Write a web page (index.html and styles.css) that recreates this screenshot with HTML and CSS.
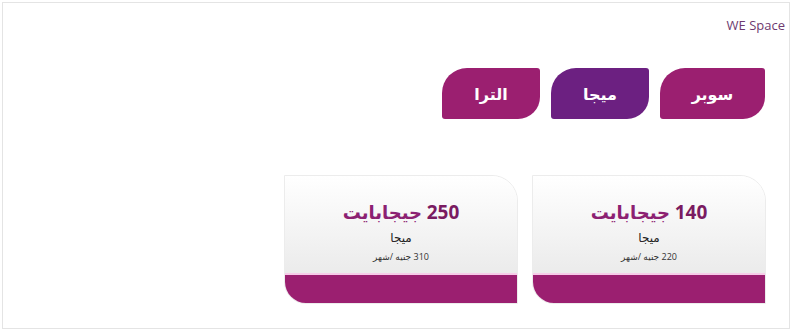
FILE: index.html
```html
<!DOCTYPE html>
<html lang="ar" dir="rtl">
<head>
    <meta charset="UTF-8">
    <meta name="viewport" content="width=device-width, initial-scale=1.0">
    <title>WE Space</title>
    <link rel="stylesheet" href="styles.css">
</head>
<body>

    <div class="space-box">
        <div class="brand">WE Space</div>

        <div class="tabs">
            <button class="tab tab-first">سوبر</button>
            <button class="tab active">ميجا</button>
            <button class="tab">الترا</button>
        </div>

        <div class="cards">
            <div class="card">
                <div class="card-body">
                    <h3><span class="num">140</span> جيجابايت</h3>
                    <p class="plan">ميجا</p>
                    <p class="price">220 جنيه /شهر</p>
                </div>
                <div class="card-foot"></div>
            </div>
            <div class="card">
                <div class="card-body">
                    <h3><span class="num">250</span> جيجابايت</h3>
                    <p class="plan">ميجا</p>
                    <p class="price">310 جنيه /شهر</p>
                </div>
                <div class="card-foot"></div>
            </div>
        </div>
    </div>

</body>
</html>
```
FILE: styles.css
```css
body {
    margin: 0;
    padding: 2px 10px 2px 2px;
    font-family: 'Open Sans', 'DejaVu Sans', sans-serif;
    background: white;
}
.space-box {
    height: 325px;
    border: 1px solid #e4e4e4;
    padding: 0 23px 0 0;
}
.brand {
    font-size: 13px;
    color: #6e3a70;
    height: 20px;
    line-height: 20px;
    padding-top: 12px;
    margin-right: -19px;
    direction: ltr;
    text-align: right;
}
.tabs {
    display: flex;
    gap: 11px;
    margin-top: 33px;
    margin-right: 1px;
}
.tab {
    width: 98px;
    height: 51px;
    border: none;
    border-radius: 25px 3px 22px 3px;
    background: #9b1f70;
    color: white;
    font-family: inherit;
    font-size: 16px;
    font-weight: bold;
    cursor: pointer;
    padding: 0;
}
.tab-first {
    width: 105px;
}
.tab.active {
    background: #6c2081;
}
.cards {
    display: flex;
    gap: 14px;
    margin-top: 56px;
}
.card {
    width: 232px;
    border: 1px solid #ececec;
    border-radius: 0 26px 0 22px;
    overflow: hidden;
    background: white;
}
.card-body {
    height: 97px;
    background: linear-gradient(#ffffff, #ebebeb);
    text-align: center;
    border-bottom: 2px solid #f7cbe8;
}
.card-body h3 {
    margin: 0;
    padding-top: 24px;
    font-size: 18px;
    line-height: 24px;
    color: #8c2172;
}
.num {
    color: #7a1b61;
    font-size: 19px;
}
.plan {
    margin: 4px 0 0;
    font-size: 12px;
    font-weight: normal;
    line-height: 20px;
    color: #222;
}
.price {
    margin: 2px 0 0;
    font-size: 9px;
    line-height: 14px;
    color: #333;
}
.card-foot {
    height: 28px;
    background: #9b1f70;
}
```
